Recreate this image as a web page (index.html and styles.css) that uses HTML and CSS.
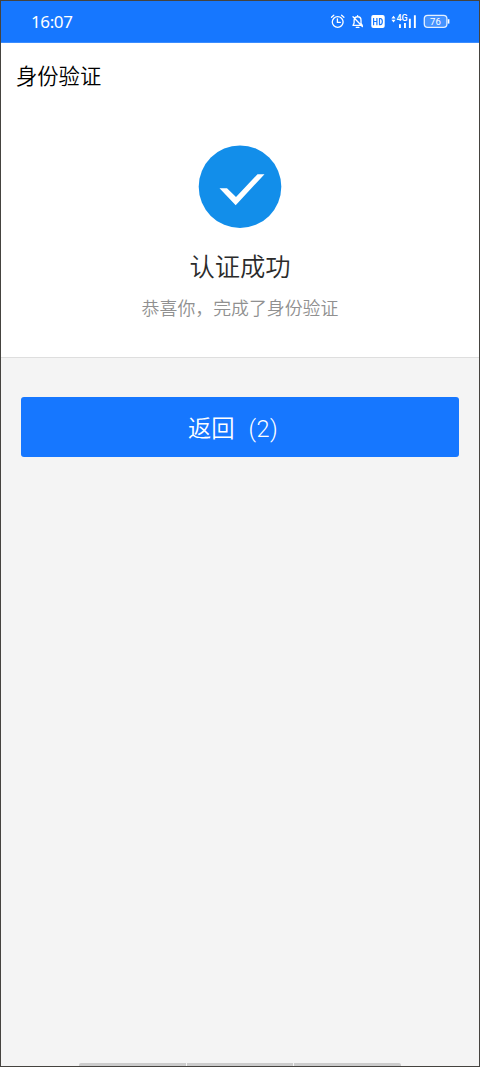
FILE: index.html
```html
<!DOCTYPE html>
<html lang="zh-CN">
<head>
<meta charset="utf-8">
<title>身份验证</title>
<link rel="stylesheet" href="styles.css">
</head>
<body>
<div class="screen">
  <div class="statusbar">
    <span class="clock">16:07</span>
    <svg class="status-icons" width="122" height="20" viewBox="329 11 122 20">
      <g fill="none" stroke="#fff" stroke-width="1.3" stroke-linecap="round">
        <circle cx="337.7" cy="22" r="5.4"/>
        <path d="M337.4 18.8v3.6h2.9M331.5 17.2l2.3-2M343.9 17.2l-2.3-2"/>
        <path stroke-linejoin="round" d="M353 25.4h9.3l-1.3-2v-3.2c0-4.6-6.6-4.6-6.9 0v2.8zM357.6 16.4v-.8M356.3 27.4h2.6M353 16.7l9.4 9.8"/>
      </g>
      <rect x="371.3" y="15" width="13.4" height="13" rx="2" fill="#fff"/>
      <path fill="none" stroke="#1677ff" stroke-width="1.2" d="M373.6 18v7.2M376.9 18v7.2M373.6 21.5h3.3M379.5 18.5h.8c2.7 0 2.7 6.2 0 6.2h-.8z"/>
      <path fill="#fff" d="M391.4 18.5l2.1-2.7 2.1 2.7zM391.4 19.7l2.1 2.7 2.1-2.7zM399 24.3h1.9V28H399zM404 23h1.9V28H404zM408.9 18.8h1.9V28h-1.9zM413.9 15.2h1.9V28h-1.9z"/>
      <text class="network" x="396.4" y="21.3">4G</text>
      <rect x="424.3" y="15.4" width="22.6" height="12" rx="3.4" fill="#4593ff" stroke="#e4f0ff" stroke-width="1.3"/>
      <path d="M448.6 19.2v4.4" stroke="#fff" stroke-width="1.6"/>
      <text class="battery" x="435.4" y="25" text-anchor="middle">76</text>
    </svg>
  </div>
  <header class="titlebar">身份验证</header>
  <main class="result">
    <svg class="result-icon" width="84" height="84" viewBox="0 0 84 84">
      <circle cx="42" cy="41.7" r="41.3" fill="#128eea"/>
      <path d="M21.5 43.2H29L38 52 59.5 29.2H66.5L37.7 60.2Z" fill="#fff"/>
    </svg>
    <h1 class="result-title">认证成功</h1>
    <p class="result-text">恭喜你，完成了身份验证</p>
  </main>
  <div class="actions">
    <button class="back">返回<span class="count">(2)</span></button>
  </div>
  <div class="tabs"><i></i><i></i><i></i></div>
</div>
</body>
</html>
```
FILE: styles.css
```css
* { box-sizing: border-box; }
body { margin: 0; }
.screen {
  width: 480px;
  height: 1067px;
  display: flex;
  flex-direction: column;
  border: 1px solid #45433f;
  background: #f4f4f4;
  font-family: "Noto Sans CJK SC", sans-serif;
  font-weight: 350;
}
.statusbar {
  height: 42px;
  display: flex;
  justify-content: space-between;
  padding: 10px 28px 0 30px;
  background: #1677ff;
  border-bottom: 1px solid #3b8dff;
}
.clock {
  color: #fff;
  font: 400 17px/21px "Noto Sans", sans-serif;
  letter-spacing: -0.4px;
}
.status-icons { display: block; }
.network { fill: #fff; font: 500 9px Roboto, sans-serif; }
.battery { fill: #fff; font: 400 9.5px Roboto, sans-serif; }
.titlebar {
  height: 64px;
  padding-left: 15px;
  background: #fff;
  color: #000;
  font-size: 21.3px;
  line-height: 63px;
}
.result {
  height: 251px;
  padding-top: 38px;
  display: flex;
  flex-direction: column;
  align-items: center;
  background: #fff;
  border-bottom: 1px solid #dedede;
}
.result-icon { display: block; }
.result-title {
  margin: 19px 0 0;
  color: #2b2b2b;
  font-size: 25.3px;
  font-weight: 350;
  line-height: 35px;
}
.result-text {
  margin: 11px 0 0;
  color: #909090;
  font-size: 17.9px;
  line-height: 26px;
}
.actions { padding: 39px 20px 0; }
.back {
  display: block;
  width: 438px;
  height: 60px;
  margin: 0;
  padding: 0 0 0 167px;
  border: 0;
  border-radius: 3px;
  background: #1677ff;
  color: #fff;
  font: 350 23.3px/60px "Noto Sans CJK SC", sans-serif;
  text-align: left;
}
.count {
  margin-left: 14px;
  font-family: Roboto, "Noto Sans", sans-serif;
  font-size: 23.5px;
  font-weight: 350;
  letter-spacing: 0.4px;
}
.tabs {
  display: flex;
  justify-content: center;
  gap: 1px;
  height: 3px;
  margin-top: auto;
}
.tabs i { width: 106.6px; background: #ccc; }
.tabs i:first-child { border-top-left-radius: 2px; }
.tabs i:last-child { border-top-right-radius: 2px; }
```
